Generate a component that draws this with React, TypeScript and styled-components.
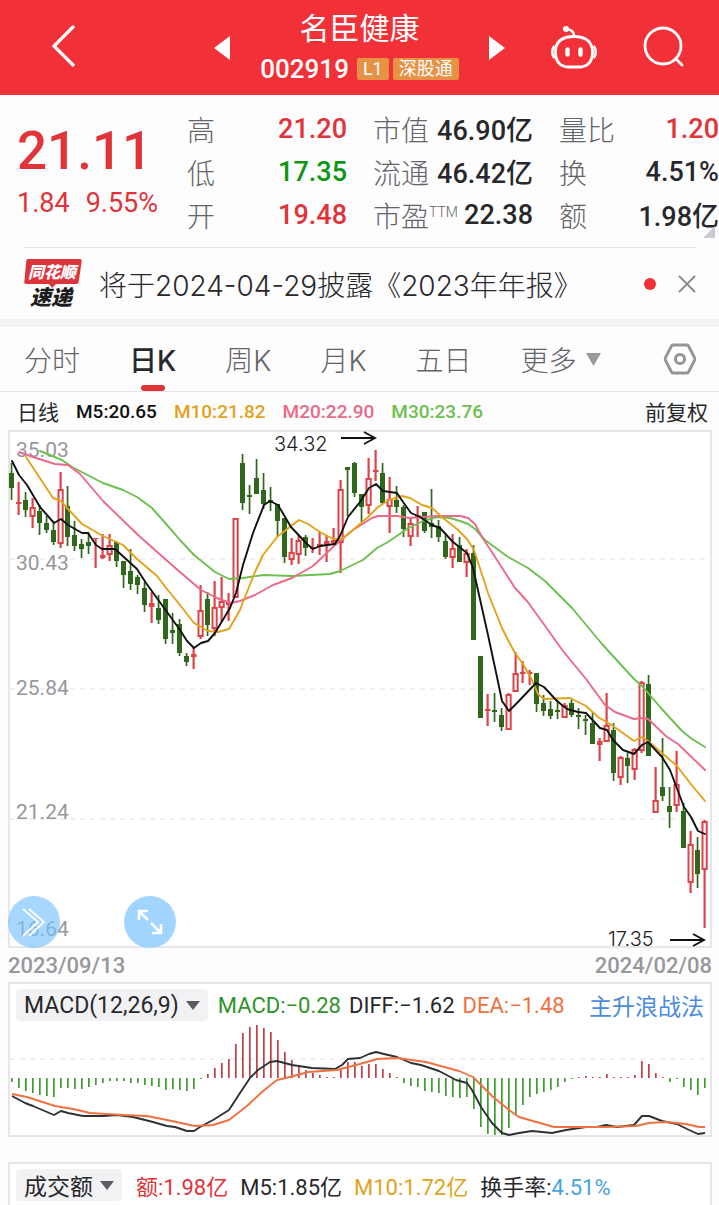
import React from "react";
import styled, { createGlobalStyle } from "styled-components";

const palette = {
  brand: "#f13037",
  rise: "#e0333a",
  fall: "#0f9611",
  ink: "#28282c",
  label: "#646469",
  muted: "#97979c",
  badge: "#e59245",
  rule: "#e6e6e8",
  m10: "#e2a21a",
  m20: "#ea6a88",
  m30: "#6cc04f",
  dea: "#f0713f",
  sky: "#45a5e2",
  link: "#4a8be0",
};

const GlobalStyle = createGlobalStyle`
  * { box-sizing: border-box; }
  body {
    margin: 0;
    background: #fdfdfd;
    color: ${palette.ink};
    font-family: Roboto, "Noto Sans CJK SC", sans-serif;
  }
  button { font: inherit; color: inherit; background: none; border: 0; padding: 0; cursor: pointer; }
  a { text-decoration: none; }
  svg { display: block; overflow: visible; }
`;

const Page = styled.div`
  overflow: hidden;
`;

/* ---------- header ---------- */

const TopBar = styled.header`
  display: grid;
  grid-template-columns: 1fr auto 1fr;
  align-items: center;
  height: 95px;
  background: ${palette.brand};
  color: #fff;
`;

const TopLeft = styled.div`
  padding-left: 50px;
`;

const TopRight = styled.div`
  display: flex;
  justify-content: flex-end;
  gap: 44px;
  padding-right: 33px;
`;

const StockSwitcher = styled.div`
  display: flex;
  align-items: center;
  justify-content: space-between;
  width: 292px;
`;

const StockTitle = styled.div`
  display: flex;
  flex-direction: column;
  align-items: center;
`;

const StockName = styled.h1`
  margin: 0;
  font-size: 30px;
  font-weight: 400;
  line-height: 42px;
`;

const StockMeta = styled.div`
  display: flex;
  align-items: center;
  gap: 4px;
  height: 38px;
`;

const StockCode = styled.span`
  margin-right: 4px;
  font-size: 26px;
  font-weight: 500;
`;

const Badge = styled.span`
  padding: 0 6px;
  background: ${palette.badge};
  border-radius: 2px;
  font-size: 18px;
  line-height: 22px;
`;

/* ---------- quote ---------- */

const Quote = styled.section`
  display: flex;
  padding-top: 12px;
  height: 152px;
  position: relative;
`;

const PriceBlock = styled.div`
  width: 187px;
  padding: 10px 0 0 17px;
  color: ${palette.rise};
`;

const Price = styled.div`
  font-size: 53px;
  font-weight: 500;
  line-height: 68px;
`;

const Change = styled.div`
  display: flex;
  gap: 16px;
  font-size: 27px;
  line-height: 36px;
`;

const Stats = styled.div`
  flex: 1;
  display: grid;
  grid-template-columns: repeat(3, 1fr);
  column-gap: 26px;
`;

const StatList = styled.dl`
  margin: 0;
`;

const Stat = styled.div`
  display: flex;
  align-items: center;
  justify-content: space-between;
  height: 43px;
  white-space: nowrap;
`;

const StatLabel = styled.dt`
  color: ${palette.label};
  font-size: 28px;
  font-weight: 300;
  sup { font-size: 14px; line-height: 0; }
`;

const StatValue = styled.dd<{ $color?: string }>`
  margin: 0;
  color: ${(p) => p.$color ?? palette.ink};
  font-size: 27px;
  font-weight: 500;
`;

const Corner = styled.span`
  position: absolute;
  right: 4px;
  bottom: 9px;
  border: 6px solid transparent;
  border-right-color: #c9c9d2;
  border-bottom-color: #c9c9d2;
`;

/* ---------- news ---------- */

const News = styled.section`
  display: flex;
  align-items: center;
  height: 72px;
  margin: 0 23px;
  border-top: 1px solid ${palette.rule};
`;

const NewsLink = styled.a`
  flex: 1;
  margin-left: 16px;
  color: ${palette.ink};
  font-family: Inter, "Noto Sans CJK SC", sans-serif;
  font-size: 28px;
  font-weight: 300;
  white-space: nowrap;
`;

const Dot = styled.span`
  width: 12px;
  height: 12px;
  margin-right: 22px;
  border-radius: 50%;
  background: ${palette.brand};
`;

/* ---------- tabs ---------- */

const Tabs = styled.nav`
  display: flex;
  align-items: stretch;
  gap: 49px;
  height: 73px;
  padding: 0 22px 0 24px;
  border-top: 8px solid #f3f3f4;
  border-bottom: 1px solid ${palette.rule};
`;

const Tab = styled.button<{ $active?: boolean }>`
  display: flex;
  align-items: center;
  gap: 9px;
  position: relative;
  color: ${(p) => (p.$active ? palette.ink : palette.label)};
  font-family: Inter, "Noto Sans CJK SC", sans-serif;
  font-size: 28px;
  font-weight: ${(p) => (p.$active ? 500 : 300)};
  white-space: nowrap;

  &::after {
    content: "";
    display: ${(p) => (p.$active ? "block" : "none")};
    position: absolute;
    left: calc(50% - 12px);
    bottom: 0;
    width: 24px;
    height: 6px;
    border-radius: 3px;
    background: ${palette.rise};
  }
`;

const SettingsButton = styled.button`
  margin-left: auto;
`;

/* ---------- charts ---------- */

const AverageRow = styled.div`
  display: flex;
  align-items: center;
  gap: 17px;
  height: 38px;
  padding: 0 11px 0 17px;
  font-size: 19px;
  white-space: nowrap;
`;

const Caption = styled.span<{ $end?: boolean }>`
  margin-left: ${(p) => (p.$end ? "auto" : "0")};
  font-size: 21px;
`;

const Average = styled.span<{ $color: string }>`
  color: ${(p) => p.$color};
  font-weight: 500;
`;

const Panel = styled.section`
  position: relative;
  margin: 0 7px 0 8px;
  border: 2px solid ${palette.rule};
  background: #fff;
`;

const Plot = styled.svg`
  width: 100%;
  height: auto;
`;

const ChartTools = styled.div`
  position: absolute;
  left: -2px;
  bottom: -2px;
  display: flex;
  gap: 64px;
`;

const RoundButton = styled.button<{ $solid?: boolean }>`
  display: grid;
  place-items: center;
  width: 52px;
  height: 52px;
  border-radius: 50%;
  background: ${(p) => (p.$solid ? "#a1d4fe" : "rgba(120, 194, 253, 0.65)")};
`;

const Dates = styled.div`
  display: flex;
  justify-content: space-between;
  height: 34px;
  padding: 0 7px 0 8px;
  color: ${palette.muted};
  font-size: 22px;
  font-weight: 500;
  line-height: 35px;
`;

const PanelHead = styled.div<{ $gap: number }>`
  display: flex;
  align-items: center;
  gap: ${(p) => p.$gap}px;
  height: 42px;
  padding-left: 6px;
  font-size: 22px;
  white-space: nowrap;
`;

const Picker = styled.button`
  display: flex;
  align-items: center;
  gap: 7px;
  height: 32px;
  padding: 0 8px;
  margin-right: 2px;
  border-radius: 4px;
  background: #f2f2f5;
  font-size: 23px;
`;

const Reading = styled.span<{ $color?: string }>`
  color: ${(p) => p.$color ?? palette.ink};
`;

const StrategyLink = styled.a`
  margin-left: auto;
  padding-right: 6px;
  color: ${palette.link};
  font-size: 23px;
`;

const Spacer = styled.div`
  height: 25px;
`;

const VolumePanel = styled(Panel)`
  border-bottom: 0;
`;

/* kind, high, body top, body bottom, low */
type Candle = ["u" | "d", number, number, number, number];

const candles: Candle[] = [
  ["d", 33, 43, 58, 70], ["u", 52, 72, 74, 85], ["d", 62, 70, 80, 87], ["u", 68, 77, 86, 98],
  ["d", 75, 81, 93, 105], ["d", 86, 93, 100, 103], ["d", 93, 100, 112, 115], ["u", 42, 59, 113, 118],
  ["d", 56, 76, 107, 116], ["d", 91, 105, 116, 121], ["d", 109, 114, 119, 128], ["d", 102, 112, 116, 124],
  ["u", 108, 108, 109, 138], ["u", 104, 125, 128, 129], ["u", 104, 115, 124, 131], ["d", 111, 112, 131, 137],
  ["d", 131, 131, 145, 158], ["d", 119, 141, 154, 160], ["d", 145, 147, 155, 164], ["d", 152, 158, 175, 182],
  ["u", 162, 173, 177, 193], ["d", 165, 178, 190, 194], ["d", 169, 169, 209, 214], ["d", 183, 200, 203, 214],
  ["d", 189, 194, 223, 226], ["d", 223, 226, 232, 236], ["u", 218, 224, 227, 239], ["u", 155, 180, 206, 209],
  ["d", 162, 169, 195, 206], ["u", 151, 177, 198, 206], ["u", 147, 171, 177, 192], ["u", 163, 172, 175, 191],
  ["u", 88, 88, 167, 167], ["d", 24, 33, 73, 80], ["d", 55, 65, 67, 84], ["d", 29, 48, 64, 64],
  ["d", 43, 60, 74, 79], ["d", 57, 70, 73, 81], ["d", 74, 74, 91, 106], ["d", 88, 88, 127, 133],
  ["u", 108, 122, 129, 135], ["u", 105, 110, 124, 134], ["d", 105, 107, 118, 126], ["u", 108, 117, 119, 123],
  ["u", 102, 114, 117, 125], ["u", 105, 111, 115, 132], ["u", 98, 110, 113, 115], ["u", 50, 59, 112, 143],
  ["d", 37, 37, 40, 86], ["d", 32, 33, 63, 67], ["d", 64, 64, 77, 92], ["u", 28, 48, 75, 84],
  ["u", 20, 40, 42, 51], ["d", 33, 43, 73, 74], ["u", 47, 69, 76, 103], ["d", 56, 70, 77, 83],
  ["d", 75, 77, 99, 107], ["u", 88, 93, 106, 116], ["u", 76, 85, 88, 107], ["d", 82, 82, 101, 103],
  ["d", 59, 93, 97, 108], ["d", 90, 96, 107, 112], ["d", 103, 111, 127, 129], ["u", 104, 118, 127, 138],
  ["d", 107, 115, 132, 132], ["u", 119, 123, 132, 147], ["d", 115, 123, 210, 210], ["d", 226, 226, 288, 288],
  ["u", 264, 279, 281, 296], ["d", 263, 280, 282, 292], ["d", 278, 285, 297, 301], ["u", 263, 264, 299, 299],
  ["u", 222, 243, 261, 262], ["u", 231, 242, 244, 253], ["u", 240, 242, 244, 255], ["d", 243, 243, 274, 282],
  ["d", 265, 273, 281, 286], ["d", 271, 279, 286, 289], ["d", 270, 280, 282, 289], ["u", 273, 275, 287, 288],
  ["d", 268, 273, 285, 287], ["d", 278, 285, 287, 299], ["d", 285, 289, 291, 305], ["d", 283, 293, 314, 314],
  ["u", 308, 311, 315, 331], ["u", 263, 295, 311, 311], ["d", 293, 300, 343, 351], ["u", 326, 327, 347, 355],
  ["d", 323, 328, 336, 353], ["u", 318, 319, 339, 350], ["u", 251, 252, 320, 323], ["d", 245, 254, 326, 326],
  ["u", 337, 370, 382, 382], ["d", 308, 357, 366, 371], ["d", 357, 376, 382, 398], ["u", 321, 354, 375, 382],
  ["d", 373, 381, 418, 418], ["u", 401, 414, 452, 463], ["d", 407, 420, 444, 458], ["u", 390, 391, 439, 498],
];

const averages = [
  {
    color: palette.m30,
    points:
      "32,21 54,30 64,37 95,53 115,60 129,67 144,78 159,95 172,110 186,125 207,142 221,149 235,148 255,145 284,146 322,144 332,141 355,130 369,118 380,112 399,99 415,91 429,87 442,88 452,91 460,94 467,99 477,110 500,127 520,138 537,151 564,178 594,214 626,249 635,257 652,277 674,301 684,309 697,317",
  },
  {
    color: palette.m20,
    points:
      "11,22 25,27 47,34 60,35 72,44 95,71 130,105 165,136 193,160 209,168 222,173 232,171 247,165 265,155 284,148 305,136 325,117 345,100 364,88 370,86 389,86 402,88 429,86 452,86 460,88 467,94 474,107 489,130 507,158 519,171 535,193 555,221 578,249 597,275 607,282 626,289 634,288 640,289 659,307 670,314 697,340",
  },
  {
    color: palette.m10,
    points:
      "18,27 45,68 53,71 60,79 74,94 95,106 115,115 129,129 149,146 159,159 172,175 186,193 200,201 210,202 221,199 232,180 235,172 247,142 255,125 269,107 283,96 291,90 300,94 312,102 325,109 334,109 345,100 360,87 370,77 381,70 394,66 402,68 414,75 424,78 435,88 449,99 459,109 466,120 480,163 494,198 501,212 507,223 515,234 524,250 530,264 536,269 562,268 578,276 590,287 605,296 626,311 634,307 640,311 654,323 669,336 682,353 697,371",
  },
  {
    color: "#111",
    points:
      "4,31 11,45 19,55 32,77 46,93 53,89 60,95 74,103 80,103 88,115 94,119 107,119 129,139 138,153 159,182 172,200 179,211 186,218 193,213 200,211 207,203 222,178 228,163 235,135 245,103 256,75 262,71 270,75 283,97 299,114 305,119 312,116 327,114 332,106 340,87 352,72 361,58 368,54 375,61 389,63 395,72 403,83 412,87 424,95 432,98 445,112 459,123 465,138 480,205 489,247 494,271 501,281 509,273 528,253 536,257 549,271 559,279 570,282 578,283 592,298 599,300 605,310 615,320 626,324 634,315 640,312 654,327 662,340 676,377 683,387 690,401 697,404",
  },
];

const priceLabels = [
  ["35.03", 27],
  ["30.43", 140],
  ["25.84", 265],
  ["21.24", 389],
  ["16.64", 506],
] as const;

/* bar ends of the MACD histogram; the zero line is at 56 */
const macdZero = 56;
const macdBars = [
  60, 66, 69, 71, 73, 74, 75, 66, 66, 67, 67, 65, 63, 61, 59, 59, 59, 61, 61, 63, 64, 65, 68, 67, 68, 69, 67, 57, 52, 46,
  41, 37, 22, 11, 5, 3, 6, 10, 18, 30, 38, 44, 48, 51, 53, 55, 55, 48, 40, 40, 44, 42, 42, 47, 51, 55, 61, 64, 65, 69,
  70, 71, 74, 75, 76, 75, 87, 105, 112, 113, 113, 106, 93, 83, 75, 72, 70, 68, 65, 60, 57, 55, 54, 55, 55, 52, 55, 55, 55, 53,
  39, 42, 51, 55, 60, 57, 65, 68, 73, 66,
];

const diffPoints =
  "4,74 17,81 25,84 46,93 53,89 60,91 75,94 95,94 109,93 125,95 145,100 159,104 167,105 179,109 186,109 192,105 205,98 221,88 232,71 242,56 250,48 262,40 269,39 284,43 304,46 327,47 334,43 340,37 352,36 361,32 368,30 376,32 389,35 403,41 413,43 431,49 448,58 459,61 464,68 473,85 484,101 494,111 501,113 511,111 524,109 544,111 558,108 578,105 589,105 598,103 609,105 626,103 634,94 641,94 654,99 669,102 679,107 690,112 697,111";
const deaPoints =
  "4,72 19,75 47,84 65,87 82,91 115,93 139,94 159,98 187,104 205,103 221,98 239,84 255,69 269,58 282,55 300,50 329,48 352,42 369,37 389,36 418,40 451,49 465,55 484,74 501,88 511,95 546,105 598,105 628,104 641,101 658,100 678,102 691,105 697,105";

const slot = (i: number) => 3 + 7 * i;

const CandleChart = () => (
  <Plot viewBox="2 2 700 514" role="img" aria-label="日K线图">
    {[129, 259, 389].map((y) => (
      <line key={y} x1="2" x2="702" y1={y} y2={y} stroke="#dfdfe2" strokeDasharray="5 5" />
    ))}
    <g fill={palette.muted} fontSize="21" fontFamily="Roboto" fontWeight="400">
      {priceLabels.map(([label, y]) => (
        <text key={label} x="8" y={y}>
          {label}
        </text>
      ))}
    </g>
    {candles.map(([kind, high, top, bottom, low], i) => {
      const x = slot(i);
      if (kind === "d") {
        return (
          <g key={i} fill="#2f681c">
            <rect x={x - 0.3} y={high} width="1.7" height={low - high} />
            <rect x={x - 2} y={top} width="5" height={Math.max(bottom - top, 1)} />
          </g>
        );
      }
      const hollow = bottom - top > 4;
      return (
        <g key={i} fill="#dc4449">
          <rect x={x - 0.5} y={high} width="2.2" height={top - high} />
          <rect x={x - 0.5} y={bottom} width="2.2" height={low - bottom} />
          {hollow ? (
            <rect x={x - 1.5} y={top + 1} width="4.200" height={bottom - top - 1} fill="#fff" stroke="#dc4449" strokeWidth="2" />
          ) : (
            <rect x={x - 2} y={top} width="5.500" height={bottom - top} />
          )}
        </g>
      );
    })}
    {averages.map((line) => (
      <polyline
        key={line.color}
        points={line.points}
        fill="none"
        stroke={line.color}
        strokeWidth="1.9"
        strokeLinejoin="round"
        strokeLinecap="round"
      />
    ))}
    <g fill="#1c1c1e" fontSize="20" fontFamily="Inter" fontWeight="300">
      <text x="266" y="21">34.32</text>
      <text x="600" y="516">17.35</text>
    </g>
    <g fill="none" stroke="#111" strokeWidth="1.9">
      <path d="M333 8h34M356 2l11 6-11 6" />
      <path d="M662 510h34M685 504l11 6-11 6" />
    </g>
  </Plot>
);

const MacdChart = () => (
  <Plot viewBox="2 4 700 109" role="img" aria-label="MACD">
    <line x1="2" x2="702" y1="37" y2="37" stroke="#dfdfe2" strokeDasharray="5 5" />
    {macdBars.map((end, i) => (
      <rect
        key={i}
        x={slot(i)}
        y={Math.min(end, macdZero)}
        width="1.7"
        height={Math.abs(end - macdZero)}
        fill={end > macdZero ? "#3f9a32" : "#c04048"}
      />
    ))}
    <g fill="none" strokeWidth="1.9" strokeLinejoin="round">
      <polyline points={diffPoints} stroke="#2d3234" />
      <polyline points={deaPoints} stroke={palette.dea} />
    </g>
  </Plot>
);

const BackIcon = () => (
  <svg width="28" height="44" viewBox="0 0 28 44" fill="none" stroke="#fff" strokeWidth="3.200">
    <path d="M24 2L4 22l20 20" />
  </svg>
);

const RobotIcon = () => (
  <svg width="48" height="44" viewBox="0 0 48 44" fill="none" stroke="#fff" strokeWidth="2.800">
    <circle cx="16" cy="3" r="3" fill="#fff" stroke="none" />
    <path d="M17 3.500c5 0 7 2 7 7" strokeWidth="2.400" />
    <path d="M24 10.500c-11 0-18.500 4.500-18.500 15.500 0 10 5 15 14 15h9c9 0 14-5 14-15 0-11-7.500-15.500-18.500-15.500z" />
    <path d="M4.500 20c-3 3-3 9 0 12M43.500 20c3 3 3 9 0 12" strokeWidth="2.600" />
    <path d="M17.500 23.500v5M30.500 23.500v5" strokeWidth="4.400" strokeLinecap="round" />
  </svg>
);

const SearchIcon = () => (
  <svg width="44" height="44" viewBox="0 0 44 44" fill="none" stroke="#fff" strokeWidth="2.800" strokeLinecap="round">
    <circle cx="21" cy="20" r="18" />
    <path d="M34 33l6 6" />
  </svg>
);

const Triangle = ({ d, w, h, fill }: { d: string; w: number; h: number; fill: string }) => (
  <svg width={w} height={h} viewBox={`0 0 ${w} ${h}`} fill={fill}>
    <path d={d} />
  </svg>
);

const CaretDown = () => <Triangle w={14} h={9} d="M0 0h14L7 9z" fill="#5c5c60" />;

const ExpressLogo = () => (
  <svg width="60" height="52" viewBox="0 0 60 52" role="img" aria-label="同花顺速递">
    <path d="M5 1h52q2 0 1.700 2l-3 21q-.4 2-2.500 2H33l-4 4-3-4H3q-2 0-1.700-2L3.300 3q.2-2 1.700-2z" fill="#dc343b" />
    <g fontFamily="Noto Sans CJK SC" fontWeight="900" fontStyle="italic">
      <text x="5" y="20" fontSize="16" fill="#fff">同花顺</text>
      <text x="7" y="47" fontSize="21" fill="#1d1d1f">速递</text>
    </g>
  </svg>
);

const CloseIcon = () => (
  <svg width="18" height="18" viewBox="0 0 18 18" stroke="#8a8a8e" strokeWidth="1.800">
    <path d="M1 1l16 16M17 1L1 17" />
  </svg>
);

const SettingsIcon = () => (
  <svg width="34" height="32" viewBox="0 0 34 32" fill="none" stroke="#949498" strokeWidth="2.800" strokeLinejoin="round">
    <path d="M10 2h14q1 0 1.500 1l6 11.500q.7 1.500 0 3L25.500 29q-.5 1-1.500 1H10q-1 0-1.500-1l-6-11.500q-.7-1.500 0-3L8.500 3q.5-1 1.500-1z" />
    <circle cx="17" cy="16" r="4.600" strokeWidth="3" />
  </svg>
);

const MoreArrow = () => <Triangle w={15} h={13} d="M0 0h15L7.500 13z" fill="#9a9a9e" />;

type StatItem = { label: React.ReactNode; value: string; color?: string };

const statColumns: StatItem[][] = [
  [
    { label: "高", value: "21.20", color: palette.rise },
    { label: "低", value: "17.35", color: palette.fall },
    { label: "开", value: "19.48", color: palette.rise },
  ],
  [
    { label: "市值", value: "46.90亿" },
    { label: "流通", value: "46.42亿" },
    { label: <>市盈<sup>TTM</sup></>, value: "22.38" },
  ],
  [
    { label: "量比", value: "1.20", color: palette.rise },
    { label: "换", value: "4.51%" },
    { label: "额", value: "1.98亿" },
  ],
];

const tabs = ["分时", "日K", "周K", "月K", "五日"];

export default function App() {
  return (
    <Page>
      <GlobalStyle />
      <TopBar>
        <TopLeft>
          <button aria-label="返回"><BackIcon /></button>
        </TopLeft>
        <StockSwitcher>
          <button aria-label="上一只"><Triangle w={16} h={24} d="M16 0v24L0 12z" fill="#fff" /></button>
          <StockTitle>
            <StockName>名臣健康</StockName>
            <StockMeta>
              <StockCode>002919</StockCode>
              <Badge>L1</Badge>
              <Badge>深股通</Badge>
            </StockMeta>
          </StockTitle>
          <button aria-label="下一只"><Triangle w={16} h={24} d="M0 0v24l16-12z" fill="#fff" /></button>
        </StockSwitcher>
        <TopRight>
          <button aria-label="智能助手"><RobotIcon /></button>
          <button aria-label="搜索"><SearchIcon /></button>
        </TopRight>
      </TopBar>

      <Quote>
        <PriceBlock>
          <Price>21.11</Price>
          <Change>
            <span>1.84</span>
            <span>9.55%</span>
          </Change>
        </PriceBlock>
        <Stats>
          {statColumns.map((column, c) => (
            <StatList key={c}>
              {column.map((item) => (
                <Stat key={item.value}>
                  <StatLabel>{item.label}</StatLabel>
                  <StatValue $color={item.color}>{item.value}</StatValue>
                </Stat>
              ))}
            </StatList>
          ))}
        </Stats>
        <Corner />
      </Quote>

      <News>
        <ExpressLogo />
        <NewsLink href="#report">将于2024-04-29披露《2023年年报》</NewsLink>
        <Dot />
        <button aria-label="关闭"><CloseIcon /></button>
      </News>

      <Tabs>
        {tabs.map((tab) => (
          <Tab key={tab} $active={tab === "日K"}>{tab}</Tab>
        ))}
        <Tab>更多<MoreArrow /></Tab>
        <SettingsButton aria-label="设置"><SettingsIcon /></SettingsButton>
      </Tabs>

      <AverageRow>
        <Caption>日线</Caption>
        <Average $color="#111">M5:20.65</Average>
        <Average $color={palette.m10}>M10:21.82</Average>
        <Average $color={palette.m20}>M20:22.90</Average>
        <Average $color={palette.m30}>M30:23.76</Average>
        <Caption $end>前复权</Caption>
      </AverageRow>

      <Panel>
        <CandleChart />
        <ChartTools>
          <RoundButton aria-label="展开">
            <svg width="26" height="32" viewBox="0 0 26 32" fill="none" stroke="#fff" strokeWidth="1.800">
              <path d="M2 3l15 13L2 30M8 3l15 13L8 30" />
            </svg>
          </RoundButton>
          <RoundButton $solid aria-label="全屏">
            <svg width="28" height="28" viewBox="0 0 28 28" fill="none" stroke="#fff" strokeWidth="2.600">
              <path d="M3 12V3h9M3 3l9 9M25 16v9H16M25 25l-10-10" />
            </svg>
          </RoundButton>
        </ChartTools>
      </Panel>
      <Dates>
        <time dateTime="2023-09-13">2023/09/13</time>
        <time dateTime="2024-02-08">2024/02/08</time>
      </Dates>

      <Panel>
        <PanelHead $gap={8}>
          <Picker>MACD(12,26,9)<CaretDown /></Picker>
          <Reading $color="#2f9428">MACD:−0.28</Reading>
          <Reading>DIFF:−1.62</Reading>
          <Reading $color={palette.dea}>DEA:−1.48</Reading>
          <StrategyLink href="#strategy">主升浪战法</StrategyLink>
        </PanelHead>
        <MacdChart />
      </Panel>
      <Spacer />
      <VolumePanel>
        <PanelHead $gap={12}>
          <Picker>成交额<CaretDown /></Picker>
          <Reading $color={palette.rise}>额:1.98亿</Reading>
          <Reading>M5:1.85亿</Reading>
          <Reading $color={palette.m10}>M10:1.72亿</Reading>
          <Reading>换手率:<Reading $color={palette.sky}>4.51%</Reading></Reading>
        </PanelHead>
      </VolumePanel>
    </Page>
  );
}
